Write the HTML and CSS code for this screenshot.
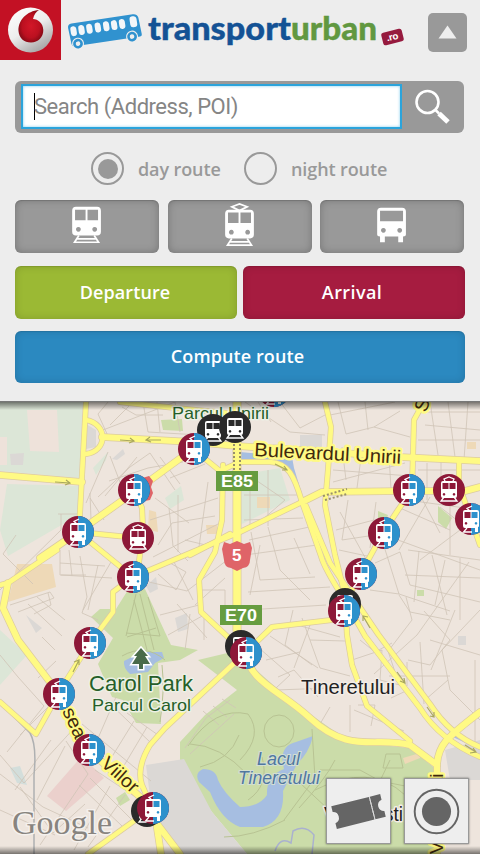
FILE: index.html
```html
<!DOCTYPE html>
<html lang="en">
<head>
<meta charset="utf-8">
<title>transporturban.ro</title>
<link rel="stylesheet" href="styles.css">
</head>
<body>
<main class="app">
<section class="panel">
  <header class="header">
    <svg class="operator" viewBox="0 0 61 60">
      <defs>
        <linearGradient id="ball" x1="0" y1="0" x2=".6" y2="1"><stop offset="0" stop-color="#fff"/><stop offset=".55" stop-color="#eee"/><stop offset="1" stop-color="#aaa"/></linearGradient>
        <radialGradient id="drop"><stop offset="0" stop-color="#d31728"/><stop offset=".7" stop-color="#bc1020"/><stop offset="1" stop-color="#8e0b17"/></radialGradient>
      </defs>
      <path fill="#c31124" d="M0 0h61v60H0z"/>
      <circle cx="30.5" cy="30" r="22.5" fill="url(#ball)"/>
      <path fill="url(#drop)" d="M39 10C27 11 18 20 18.500 31C19 38 24 42.500 31 42.500C38 42.500 43.500 37 43.300 30C43 23 38 19 33 19C34 15 36 11.500 39 10Z"/>
    </svg>
    <svg class="logo" viewBox="61 0 347 60">
      <g transform="translate(67.500 24) rotate(-8.500)">
        <path fill="#3092cf" d="M4 0H66Q70 0 71 4L72 21Q72 23 70 23H4Q1 23 1 20L0 4Q0 0 4 0Z"/>
        <g fill="#f2f6f9"><rect x="2" y="3" width="6" height="10" rx="3"/><rect x="10" y="3" width="6" height="10" rx="3"/><rect x="18" y="3" width="6" height="10" rx="3"/><rect x="26.500" y="3" width="6" height="10" rx="3"/><rect x="35" y="3" width="6" height="10" rx="3"/><rect x="43" y="3" width="6" height="10" rx="3"/><rect x="51" y="3" width="6" height="10" rx="3"/><rect x="62" y="2" width="7" height="11" rx="3"/></g>
        <g fill="#eee"><circle cx="7.500" cy="21" r="6"/><circle cx="62" cy="22" r="6"/></g>
        <g fill="#eee" stroke="#3092cf" stroke-width="2.600"><circle cx="7.500" cy="21" r="3.600"/><circle cx="62" cy="22" r="3.600"/></g>
      </g>
      <text class="brand brand-blue" x="148" y="40" textLength="143" lengthAdjust="spacingAndGlyphs">transport</text>
      <text class="brand brand-green" x="291" y="40" textLength="86" lengthAdjust="spacingAndGlyphs">urban</text>
      <g transform="translate(392.500 37) rotate(-14)"><rect x="-10.500" y="-6.500" width="21" height="13" rx="2.500" fill="#961a3e"/><text class="brand-tld" x="-6" y="3">.ro</text></g>
    </svg>
    <button class="collapse" aria-label="Collapse"><svg viewBox="0 0 39 39"><path fill="#eee" d="M19.500 12.500L28.500 25.500H10.500Z"/></svg></button>
  </header>

  <div class="search">
    <div class="field"><span class="caret"></span><span class="placeholder">Search (Address, POI)</span></div>
    <svg class="lens" viewBox="0 0 62 52"><circle cx="25.500" cy="21" r="11" fill="none" stroke="#fff" stroke-width="2.600"/><path d="M33 28.500L37 32.500" stroke="#fff" stroke-width="2.500"/><path d="M37 32.500L46 41" stroke="#fff" stroke-width="5"/></svg>
  </div>

  <div class="radios">
    <div class="radio day"><span class="ring ring-on"></span><span class="radio-text">day route</span></div>
    <div class="radio night"><span class="ring"></span><span class="radio-text">night route</span></div>
  </div>

  <div class="modes">
    <button class="tile" aria-label="Metro"><svg viewBox="1 0 32 48"><path fill="#fff" fill-rule="evenodd" d="M5 5H27Q31 5 31 9V31Q31 35 27 35H5Q1 35 1 31V9Q1 5 5 5ZM4 8V19H15V8ZM17 8V19H28V8ZM7.500 26a2.500 2.500 0 1 0 .01 0ZM24.500 26a2.500 2.500 0 1 0 .01 0Z"/><path fill="none" stroke="#fff" stroke-width="1.800" d="M8 35L3.500 42H28.500L24 35M6 38.500H26"/></svg></button>
    <button class="tile" aria-label="Tram"><svg viewBox="0 0 32 48"><path fill="none" stroke="#fff" stroke-width="1.800" d="M16 9L8 5L16 2L24 5L16 9"/><path fill="#fff" fill-rule="evenodd" d="M5 8H27Q31 8 31 12V34Q31 38 27 38H5Q1 38 1 34V12Q1 8 5 8ZM4 11V22H15V11ZM17 11V22H28V11ZM7.500 29a2.500 2.500 0 1 0 .01 0ZM24.500 29a2.500 2.500 0 1 0 .01 0Z"/><path fill="none" stroke="#fff" stroke-width="1.800" d="M8 38L3.500 45H28.500L24 38M6 41.500H26"/></svg></button>
    <button class="tile" aria-label="Bus"><svg viewBox="1 0 32 48"><path fill="#fff" fill-rule="evenodd" d="M5 6H27Q31 6 31 10V34Q31 36 28 36V42H23V36H9V42H4V36Q1 36 1 34V10Q1 6 5 6ZM4 9V20H28V9ZM7.500 27a2.500 2.500 0 1 0 .01 0ZM24.500 27a2.500 2.500 0 1 0 .01 0Z"/></svg></button>
  </div>

  <div class="ends">
    <button class="action departure">Departure</button>
    <button class="action arrival">Arrival</button>
  </div>
  <button class="action compute">Compute route</button>
</section>

<section class="map">
<svg class="tiles" viewBox="0 402 480 452">
  <defs>
    <symbol id="car" viewBox="-16 -16 32 32">
      <path fill="none" stroke="#fff" stroke-width="1.300" d="M-1 -8L-4 -10.500L1 -13M-4 9L-7.500 13H1"/>
      <path fill="#fff" fill-rule="evenodd" d="M-6 -9H6Q8 -9 8 -7V7Q8 8 7 8V13H4V9H-6Q-8 9 -8 7V-7Q-8 -9 -6 -9ZM-6.500 -7V-1H-.5V-7ZM.5 -7V-1H6.500V-7ZM-5 3a1.300 1.300 0 1 0 .01 0ZM5 3a1.300 1.300 0 1 0 .01 0Z"/>
    </symbol>
    <symbol id="both" viewBox="-16 -16 32 32"><circle r="16" fill="#8d1838"/><path fill="#2d91cc" d="M0 -16A16 16 0 0 1 0 16Z"/><use href="#car" x="-16" y="-16" width="32" height="32"/></symbol>
    <symbol id="rail" viewBox="-16 -16 32 32"><path fill="none" stroke="#fff" stroke-width="1.300" d="M-5 7L-8 11H8L5 7"/><path fill="#fff" fill-rule="evenodd" d="M-6 -9H6Q8 -9 8 -7V6Q8 8 6 8H-6Q-8 8 -8 6V-7Q-8 -9 -6 -9ZM-6.500 -7V-1H-.5V-7ZM.5 -7V-1H6.500V-7ZM-5 3a1.300 1.300 0 1 0 .01 0ZM5 3a1.300 1.300 0 1 0 .01 0Z"/></symbol>
    <symbol id="tram" viewBox="-16 -16 32 32"><circle r="16" fill="#8d1838"/><path fill="none" stroke="#fff" stroke-width="1.300" d="M-4 -9L-5 -11L0 -13L5 -11L4 -9"/><use href="#rail" x="-16" y="-16" width="32" height="32"/></symbol>
    <symbol id="metro" viewBox="-16 -16 32 32"><circle r="16" fill="#2a2a2a"/><use href="#rail" x="-16" y="-16" width="32" height="32"/></symbol>
    <linearGradient id="top" x1="0" x2="0" y1="0" y2="1"><stop offset="0" stop-color="#000" stop-opacity=".5"/><stop offset="1" stop-color="#000" stop-opacity="0"/></linearGradient>
    <linearGradient id="bottom" x1="0" x2="0" y1="0" y2="1"><stop offset="0" stop-color="#000" stop-opacity="0"/><stop offset="1" stop-color="#000" stop-opacity=".5"/></linearGradient>
    <g id="roads">
      <path d="M86 402L82 475L79 531"/><path d="M86 420C108 424 108 451 86 454"/>
      <path d="M120 402L185 409L237 414"/>
      <path d="M78 532L138 538"/><path d="M78 532L133 577"/><path d="M138 570L143 530L142 508L134 490"/>
      <path d="M133 577L240 532L302 502"/>
      <path d="M133 577L113 592L113 612L90 643L64 684L36 734L0 702"/>
      <path d="M0 585L8 583L57 550"/>
      <path d="M223 465L222 520L215 552L199 580L201 612L245 653L272 627L340 619"/><path d="M193 449L220 471L240 462"/>
      <path d="M190 555L215 542L230 534"/>
      <path d="M325 402L331 427L328 470L325 505L335 555L345 595L347 635L352 665L367 706L410 741"/>
      <path d="M424 402L414 420L412 490L398 510L383 533L361 573L345 603"/>
      <path d="M459 463L459 485L471 519L480 545"/>
      <path d="M152 808L142 785Q136 768 150 745L165 728L245 653"/>
      <path d="M152 808L88 854"/>
      <path d="M240 462H270C288 463 294 475 302 502L321 556Q324 568 346 602L365 636L420 708Q440 740 480 757"/>
      <path d="M306 506L330 563L378 634L430 704Q450 735 480 747"/>
    </g>
    <g id="avenues">
      <path d="M0 475L82 482"/><path d="M102 437L193 442L237 446L300 450L400 457L480 461"/>
      <path d="M40 558L78 532L130 495L193 449L240 414"/>
      <path d="M302 502L322 492L405 491L465 491L480 487"/>
      <path d="M8 583L3 608L18 640L59 694L89 750L152 808"/>
      <path d="M154 808L161 854M158 825L180 854"/>
      <path d="M245 650C248 682 280 690 310 718C350 755 375 736 410 745L437 765"/>
      <path d="M437 765V854M437 765C438 745 446 738 480 712"/>
    </g>
  </defs>
  <path fill="#eee5dd" d="M0 402H480V854H0Z"/>
  <g fill="#dce6d7">
    <path d="M0 402H83L79 478L0 471ZM7 484L80 486L77 516L8 556L0 530Z"/><path d="M0 630L27 655L0 685ZM93 468L108 452L106 460L96 475ZM240 475L280 468L290 500L240 525ZM165 498L181 486L184 500L170 509ZM335 742L378 752L370 766L350 768L333 758Z"/>
  </g>
  <g fill="#eee2da"><path d="M27 410H57L59 452L30 451ZM0 437H7V465H0Z"/></g>
  <g fill="#cbdca9">
    <path d="M128 590L145 589L171 645L198 650L180 660L158 663L161 724L136 723L123 700L112 697L98 664L113 638L91 617L100 609L116 609Z"/>
    <path d="M245 660L290 700L350 742L410 748L437 770V854H247L212 812L180 768L180 742L205 715L237 690L198 660L240 650Z"/>
    <path d="M161 420L182 419L183 431L163 430ZM438 506L452 518L446 529L438 522ZM378 511L388 515L386 520L378 519ZM417 590h7v6h-7zM116 798L125 792L130 800L120 806Z"/>
  </g>
  <g fill="#dbd8d5">
    <path d="M146 765L184 759L212 812L247 854H180L152 812ZM86 424L96 430V447L86 449ZM10 454L24 453L23 465L11 465ZM112 459L123 449L125 454L117 460ZM300 435H322V450H300ZM26 615L42 628L36 633ZM175 618L187 613L188 629L178 632ZM146 586L156 577L158 589L150 593ZM458 636H466V645H458ZM445 750L480 740V780H450Z"/>
  </g>
  <g fill="#eed9b7"><path d="M17 564L52 564L56 587L8 602ZM149 510L156 512L158 532L148 530ZM257 497H270V508H257ZM206 525H217V534H207ZM467 442H476V449H467ZM403 758L420 753L420 758L405 764Z"/></g>
  <path fill="#ebd0cc" d="M47 796L82 756L104 778L66 811Z"/>
  <g fill="#a6bee1">
    <path d="M240 452L292 457L294 468L304 501L301 503L292 472L282 463L240 461Z"/>
    <path d="M313 736Q309 753 297 764L283 791Q285 820 263 827H240Q221 820 210 792L199 782Q194 773 203 769Q216 769 218 780Q223 792 240 807Q259 807 267 795Q266 776 284 769Q278 746 296 742Z"/>
    <path d="M124 661L142 652L162 652L164 658L155 663L148 672L130 674Q123 668 124 661Z"/>
    <path d="M450 731L480 745V750L451 736Z"/>
  </g>
  <path d="M10 768L20 766L27 785L17 783Z" fill="#d3dedb"/>
  <g class="lanes">
    <path d="M98 414L108 402M98 414L108 436M103 430L142 415L175 402M110 425L133 402M122 407L136 415L163 415M143 402L148 432L200 435M157 402L160 432M175 402L180 432"/>
    <path d="M108 452L86 503M98 497L130 467L150 453M109 481L148 468L183 462M90 498L104 520M110 456L128 503M150 453L175 490M160 457L180 484M205 464L170 478M137 457L105 496M90 493L91 520L102 514"/>
    <path d="M58 514H77M61 514V530L0 590M33 584L3 554L16 535M169 508L173 546L188 561M150 520L218 498M178 495V552M208 482L199 547M158 545L172 523L215 516M153 557L220 523M185 540L218 548M155 498L189 523"/>
    <path d="M60 550V575H86M80 556L87 597L82 613L98 620M69 550L72 576M111 562L83 610M60 563L105 566M98 565L88 610M61 575L112 578"/>
    <path d="M10 605L50 592L54 598L18 612M28 604L62 636M37 597L65 620M48 593L51 605L34 614M42 637L55 650M38 678L56 661M0 655L18 677L44 706L7 752"/>
    <path d="M149 582L187 591L240 550M158 574L176 590L186 572L170 563M174 562L193 600M195 605L225 578M200 590H225V618M160 615L199 605M168 635L204 615M190 614L185 650M204 612V640M177 604L207 638"/>
    <path d="M245 402L290 432L325 435M258 402L271 422M280 402L300 428L325 415M330 415L395 402M338 402L346 434L374 427L410 437M365 402L368 430M374 427L400 411M342 447L346 480M362 450L357 488M389 455L391 489M333 470L410 476M333 482L405 463"/>
    <path d="M418 412H480M425 425L480 430M418 440H480M430 402L438 455M448 402L455 457M468 402L464 460M418 470H480M427 463V500M441 462V495M414 501L480 510M420 495L440 533M400 508L450 530M430 497L399 550M440 507L480 538M450 500V555M480 515L420 560M398 540L480 570"/>
    <path d="M244 472L285 500L262 520M244 495H298M250 478V530M268 470V526M244 520L303 518M249 540L314 526M251 532L260 580L315 577M268 527L280 570L310 600M245 555L317 545M248 592L330 587M260 545L250 595M294 538L310 574M247 610L326 605M293 610L285 645L312 665M310 625L294 668"/>
    <path d="M340 512L367 561M348 500L342 540L395 532M376 502L370 548M336 530L374 520M339 550L367 556M375 563L400 552L410 585L480 602M383 543L399 594L450 611M408 550L480 560M419 551L414 602M432 555L447 615M445 560L435 605M460 558V620M405 575L480 578M370 590L399 594M469 562L417 635L374 674"/>
    <path d="M406 597L412 620L389 650M399 595L410 612L450 620M424 611L450 640L430 665L408 660M455 610L431 670M480 610L442 650L450 690M430 640L480 655M448 680L425 700M420 642L424 704M407 662V686M389 676H450M388 651L396 675M450 690L480 720M475 660V745"/>
    <path d="M251 641L290 675L276 688M270 636L318 668M290 623L340 637M302 618L320 668L350 676M310 640L345 641M266 660L300 652M276 690L330 688M278 677L294 670L318 697M360 640L375 652L392 643M352 660L382 650L380 680L400 685M391 698L408 690M350 705V732M358 705H375L371 726M330 707L320 724M354 710L404 731"/>
    <path d="M20 735L55 700L92 750M0 755L24 783L77 725M40 845L88 774L66 741M15 790L51 740M37 800L65 746M0 774L43 807L88 828M0 810L55 835M20 787L53 833L85 804M79 785L122 826M90 778L134 822M95 770L146 804M110 786L74 850M125 795L88 847M82 724L151 781M106 700L151 743M127 713L158 735M116 697L92 752M134 721L105 768M147 727L116 779"/>
    <path d="M185 748L206 718L230 700M190 754L234 714M203 711L219 725M213 706L227 717M222 699L236 708"/>
  </g>
  <g fill="none" stroke="#b8c393" stroke-width="1">
    <path d="M188 746Q215 706 248 714Q264 735 240 760M190 744Q220 745 248 775M200 767Q230 760 239 735M248 800Q270 785 262 757M224 837Q253 837 285 820M264 731a15 16 0 1 0 30 0a15 16 0 1 0 -30 0M312 729L315 778L284 820M335 760Q325 780 299 808M320 770H360L380 781M390 760L380 781L425 790M386 754h14l3 14h-20zM315 790Q370 762 405 795M300 783L329 810"/>
    <path d="M136 594L126 636M140 594L154 650M134 600L147 650M127 637L156 628M126 633L160 636L148 597M122 656Q145 643 165 660M162 665Q165 690 160 722"/>
  </g>
  <path fill="none" stroke="#aeb0b1" stroke-width="1.500" d="M0 703L30 733Q37 745 34 775V854"/>
  <path fill="none" stroke="#aab1cf" stroke-width="1.500" d="M275 851Q280 836 291 843L293 831Q305 824 314 835L312 854"/>
  <use href="#roads" class="road-edge"/><use href="#avenues" class="avenue-edge"/><path d="M237 402V630" class="main-edge"/>
  <use href="#roads" class="road-fill"/><use href="#avenues" class="avenue-fill"/><path d="M237 402V630" class="main-fill"/>
  <path fill="none" stroke="#99906b" stroke-width="2" stroke-dasharray="2 2" d="M234 440V470M240 440V470M323 496L347 489M325 500L347 494"/>
  <g fill="none" stroke="#aaa85f" stroke-width="1.200"><path d="M120 440L134 441M130 438L134 441L129 443M161 440H146M150 437L146 440L151 442M55 482L70 483M66 480L70 483L65 485M73 672L79 660M74 662L79 660L79 665M363 616L370 628M363 621V616L368 617M397 672L405 683M400 681L405 683L404 678M427 707L434 717M430 716L434 717V712M465 745L476 752M470 753L476 752L473 748M275 464L287 470M282 470L287 470L284 466"/></g>

  <g class="street">
    <text x="254" y="456" textLength="147" lengthAdjust="spacingAndGlyphs" transform="rotate(3 254 456)">Bulevardul Unirii</text>
    <text x="426" y="413" transform="rotate(-70 426 413)">S</text>
    <text x="62" y="711" transform="rotate(65 62 711)" textLength="32" lengthAdjust="spacingAndGlyphs">sea</text>
    <text x="100" y="765" transform="rotate(42 100 765)" textLength="43" lengthAdjust="spacingAndGlyphs">Viilor</text>
    <text x="443" y="854" transform="rotate(-90 443 854)">V</text>
    <text x="443" y="783" transform="rotate(-90 443 783)">ti</text>
  </g>
  <text class="park" x="172" y="419" font-size="17" textLength="97" lengthAdjust="spacingAndGlyphs">Parcul Unirii</text>
  <path d="M141 648L134 656H137L132 664H139V669H143V664H150L145 656H148Z" fill="#496a4a" stroke="#fff" stroke-width="3" paint-order="stroke"/>
  <text class="park" x="89" y="691" font-size="22" textLength="104" lengthAdjust="spacingAndGlyphs">Carol Park</text>
  <text class="park" x="92" y="711" font-size="17" textLength="99" lengthAdjust="spacingAndGlyphs">Parcul Carol</text>
  <text class="place" x="301" y="694" textLength="94" lengthAdjust="spacingAndGlyphs">Tineretului</text>
  <text class="place" x="324" y="821" textLength="79" lengthAdjust="spacingAndGlyphs">Văcărești</text>
  <text class="lake" x="257" y="765" textLength="43" lengthAdjust="spacingAndGlyphs">Lacul</text>
  <text class="lake" x="238" y="784" textLength="82" lengthAdjust="spacingAndGlyphs">Tineretului</text>
  <path fill="#669c40" d="M216 471h42v20h-42zM220 605h42v20h-42z"/>
  <g class="shield"><text x="221" y="487" textLength="32" lengthAdjust="spacingAndGlyphs">E85</text><text x="225" y="621" textLength="32" lengthAdjust="spacingAndGlyphs">E70</text></g>
  <g fill="#df6468"><path d="M224 542L230 544L237 541L244 544L250 542L252 548L250 560Q250 567 243 568L237 571L231 568Q224 567 224 560L222 549ZM139 479L149 476L153 481L151 487L153 493L150 500L139 502Z"/></g>
  <g class="shield"><text x="232" y="561">5</text></g>
  <text class="google" x="12" y="834" textLength="100" lengthAdjust="spacingAndGlyphs">Google</text>

  <g class="markers">
    <use href="#metro" x="197" y="414" width="32" height="32"/><use href="#metro" x="219" y="411" width="32" height="32"/>
    <use href="#metro" x="329" y="588" width="32" height="32"/><use href="#metro" x="225" y="630" width="32" height="32"/><use href="#metro" x="131" y="795" width="32" height="32"/>
    <use href="#tram" x="122" y="522" width="32" height="32"/><use href="#tram" x="433" y="474" width="32" height="32"/>
    <use href="#both" x="258" y="375" width="32" height="32"/><use href="#both" x="178" y="433" width="32" height="32"/><use href="#both" x="118" y="474" width="32" height="32"/><use href="#both" x="62" y="516" width="32" height="32"/><use href="#both" x="117" y="561" width="32" height="32"/><use href="#both" x="74" y="627" width="32" height="32"/><use href="#both" x="43" y="678" width="32" height="32"/><use href="#both" x="73" y="734" width="32" height="32"/><use href="#both" x="137" y="792" width="32" height="32"/><use href="#both" x="230" y="637" width="32" height="32"/><use href="#both" x="328" y="595" width="32" height="32"/><use href="#both" x="345" y="558" width="32" height="32"/><use href="#both" x="368" y="517" width="32" height="32"/><use href="#both" x="393" y="474" width="32" height="32"/><use href="#both" x="455" y="503" width="32" height="32"/>
  </g>
  <path fill="url(#top)" d="M0 402H480V410H0Z"/><path fill="url(#bottom)" d="M0 846H480V854H0Z"/>
</svg>
<div class="tools">
  <button class="tool" aria-label="Tickets"><svg viewBox="0 0 65 65"><g transform="translate(32.500 32.500) rotate(-14)"><path fill="#656565" d="M-26 -12H14V12H-26V6Q-21 5 -21 0Q-21 -5 -26 -6ZM15 -12H26V-6Q21 -5 21 0Q21 5 26 6V12H15Z"/><path stroke="#d4d4d4" stroke-dasharray="2 1" d="M14.500 -12V12"/></g></svg></button>
  <button class="tool" aria-label="Locate"><svg viewBox="0 0 65 65"><circle cx="32.500" cy="32.500" r="22.500" fill="none" stroke="#656565" stroke-width="2"/><circle cx="32.500" cy="32.500" r="15" fill="#656565"/></svg></button>
</div>
</section>
</main>
</body>
</html>
```
FILE: styles.css
```css
* { box-sizing: border-box; }
body { margin: 0; background: #ededed; overflow: hidden; }
button { margin: 0; padding: 0; border: 0; font: inherit; }
svg { display: block; }
.app { width: 480px; height: 854px; display: flex; flex-direction: column; }

.panel { height: 402px; flex: none; background: #ededed; border-bottom: 1px solid #777; }
.header { display: flex; height: 60px; }
.operator { width: 61px; height: 60px; }
.logo { width: 347px; height: 60px; }
.brand { font: 900 33px "Lato", sans-serif; stroke-width: .4; }
.brand-blue { fill: #145295; stroke: #145295; }
.brand-green { fill: #619840; stroke: #619840; }
.brand-tld { font: 900 10px "Lato", sans-serif; fill: #fff; }
.collapse { width: 39px; height: 39px; margin: 13px 0 0 20px; border-radius: 5px; background: #999; }

.search { display: flex; width: 449px; height: 52px; margin: 21px 0 0 15px; padding: 3px 0 0 6px; border-radius: 6px; background: #999; }
.field { display: flex; align-items: center; width: 381px; height: 45px; padding-left: 11px; background: #fff; border: 2px solid #2ba4dc; box-shadow: inset 0 0 3px #7ecbef; }
.caret { width: 1px; height: 27px; margin-right: -1px; background: #000; }
.placeholder { font: 22px "Roboto", sans-serif; color: #858585; letter-spacing: -.47px; white-space: nowrap; }
.lens { width: 62px; height: 52px; margin-top: -3px; }

.radios { display: flex; height: 33px; margin: 19px 0 0 91px; }
.radio { display: flex; align-items: center; gap: 14px; }
.day { width: 153px; }
.ring { width: 33px; height: 33px; border: 2px solid #999; border-radius: 50%; padding: 4.500px; }
.ring-on::before { content: ""; display: block; width: 20px; height: 20px; border-radius: 50%; background: #999; }
.radio-text { font: 600 18px "Open Sans", sans-serif; letter-spacing: -.1px; color: #999; white-space: nowrap; }

.modes { display: flex; justify-content: space-between; width: 449px; margin: 15px 0 0 15px; }
.tile { display: flex; justify-content: center; width: 144px; height: 53px; padding-top: 2px; border-radius: 6px; background: #999; box-shadow: inset 0 0 9px rgba(0,0,0,.23), inset 0 1px 1px rgba(0,0,0,.15); }
.tile svg { width: 31px; height: 46px; }
.ends { display: flex; gap: 6px; margin: 13px 0 0 15px; }
.action { display: block; width: 222px; height: 52.500px; border-radius: 6px; color: #fff; font: 600 18px/52px "Open Sans", sans-serif; letter-spacing: .1px; text-align: center; box-shadow: inset 0 0 9px rgba(0,0,0,.15), inset 0 1px 1px rgba(0,0,0,.1); }
.departure { background: #9bb934; padding-right: 2px; }
.arrival { background: #a61c40; padding-right: 4px; letter-spacing: .4px; }
.compute { width: 450px; height: 52px; margin: 12.500px 0 0 15px; padding: 0 5px 2px 0; background: #2b89c0; line-height: 50px; }

.map { position: relative; height: 452px; }
.tiles { width: 480px; height: 452px; }
.lanes { fill: none; stroke: #cfc4b6; stroke-width: .8px; }
.road-edge, .road-fill, .avenue-edge, .avenue-fill, .main-edge, .main-fill { fill: none; stroke-linejoin: round; stroke-linecap: round; }
.road-edge { stroke: #dccba0; stroke-width: 6px; }
.road-fill { stroke: #fffa84; stroke-width: 4.600px; }
.avenue-edge { stroke: #dccba0; stroke-width: 7.600px; }
.avenue-fill { stroke: #fffa84; stroke-width: 6.200px; }
.main-edge { stroke: #dccba0; stroke-width: 9px; }
.main-fill { stroke: #fffa84; stroke-width: 7.500px; }
.street { font: 19px "Liberation Sans", sans-serif; fill: #40290d; stroke: #fffa84; stroke-width: 5px; stroke-linejoin: round; paint-order: stroke; }
.park { font-family: "Liberation Sans", sans-serif; fill: #265f29; stroke: #edf0e5; stroke-width: 3px; stroke-linejoin: round; paint-order: stroke; }
.place { font: 20px "Liberation Sans", sans-serif; fill: #222; stroke: #f3ede7; stroke-width: 3px; stroke-linejoin: round; paint-order: stroke; }
.lake { font: italic 17.500px "Liberation Sans", sans-serif; fill: #50779f; stroke: #d2dfd3; stroke-width: 2px; paint-order: stroke; }
.shield { font: 700 17px "Liberation Sans", sans-serif; fill: #fff; }
.google { font: 34px "Liberation Serif", serif; fill: #88847f; stroke: #f5f1ed; stroke-width: 3px; paint-order: stroke; }
.tools { position: absolute; left: 326px; bottom: 10px; display: flex; gap: 13px; }
.tool { width: 65px; height: 66px; background: #eee; border: 1px solid #999; box-shadow: 0 0 2px rgba(0,0,0,.5); }
```
